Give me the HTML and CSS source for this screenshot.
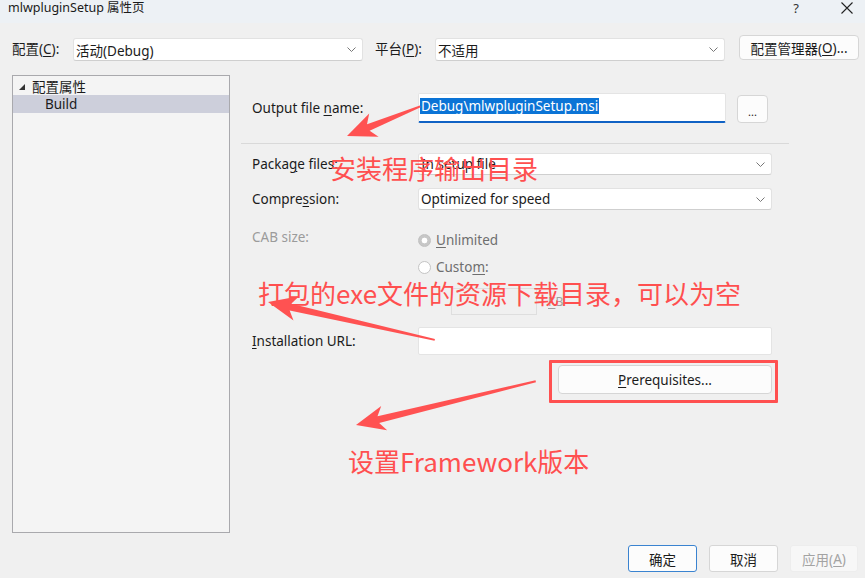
FILE: index.html
```html
<!DOCTYPE html>
<html lang="zh-CN">
<head>
<meta charset="utf-8">
<title>mlwpluginSetup 属性页</title>
<link rel="stylesheet" href="styles.css">
</head>
<body>
<div class="titlebar">
  <span class="title">mlwpluginSetup 属性页</span>
  <span class="tb-help">?</span>
  <svg class="tb-close" width="12" height="12" viewBox="0 0 12 12"><path d="M0.5 0.5 L11.5 11.5 M11.5 0.5 L0.5 11.5" stroke="#222" stroke-width="1.1" fill="none"/></svg>
</div>

<div class="toolbar">
  <span class="tlabel l1">配置(<u>C</u>):</span>
  <div class="select s1"><span>活动(Debug)</span><svg class="chev" width="9" height="5" viewBox="0 0 9 5"><path d="M0.5 0.5 L4.5 4.5 L8.5 0.5" stroke="#777" fill="none"/></svg></div>
  <span class="tlabel l2">平台(<u>P</u>):</span>
  <div class="select s2"><span>不适用</span><svg class="chev" width="9" height="5" viewBox="0 0 9 5"><path d="M0.5 0.5 L4.5 4.5 L8.5 0.5" stroke="#777" fill="none"/></svg></div>
  <div class="btn cfgmgr">配置管理器(<u>O</u>)...</div>
</div>

<div class="main">
  <div class="tree">
    <div class="tree-row root">
      <svg class="tri" width="6" height="6" viewBox="0 0 6 6"><path d="M6 0 L6 6 L0 6 Z" fill="#333"/></svg>
      <span>配置属性</span>
    </div>
    <div class="tree-row build">Build</div>
  </div>

  <div class="pane">
    <div class="row out-row">
      <span class="lbl">Output file <u>n</u>ame:</span>
      <div class="input out-input"><span class="sel">Debug\mlwpluginSetup.msi</span></div>
      <div class="btn dots">...</div>
    </div>
    <div class="sep"></div>
    <div class="row pkg-row">
      <span class="lbl">Packa<u>g</u>e files:</span>
      <div class="select wide"><span>In setup file</span><svg class="chev" width="9" height="5" viewBox="0 0 9 5"><path d="M0.5 0.5 L4.5 4.5 L8.5 0.5" stroke="#777" fill="none"/></svg></div>
    </div>
    <div class="row cmp-row">
      <span class="lbl">Compre<u>s</u>sion:</span>
      <div class="select wide"><span>Optimized for speed</span><svg class="chev" width="9" height="5" viewBox="0 0 9 5"><path d="M0.5 0.5 L4.5 4.5 L8.5 0.5" stroke="#777" fill="none"/></svg></div>
    </div>
    <div class="cab">
      <span class="lbl dis">CAB size:</span>
      <div class="radios">
        <div class="radio-row r1"><span class="radio checked"></span><span class="rtext"><u>U</u>nlimited</span></div>
        <div class="radio-row r2"><span class="radio"></span><span class="rtext">Custo<u>m</u>:</span></div>
        <div class="kb-row"><div class="kb-input"></div><span class="kb"><u>K</u>B</span></div>
      </div>
    </div>
    <div class="row url-row">
      <span class="lbl"><u>I</u>nstallation URL:</span>
      <div class="input url-input"></div>
    </div>
    <div class="btn prereq"><span><u>P</u>rerequisites...</span></div>
  </div>
</div>

<div class="footer">
  <div class="btn fbtn ok">确定</div>
  <div class="btn fbtn">取消</div>
  <div class="btn fbtn disabled">应用(<u>A</u>)</div>
</div>

<div class="note n1">安装程序输出目录</div>
<div class="note n2">打包的exe文件的资源下载目录，可以为空</div>
<div class="note n3">设置Framework版本</div>
<div class="redbox"></div>
<svg class="arrows" width="865" height="578" viewBox="0 0 865 578">
  <g fill="#ff5252">
    <g transform="translate(347 136) rotate(-22)"><polygon points="0,0 29,-12.5 23,-3.5 79,-1 79,1 23,3.5 29,12.5"/></g>
    <g transform="translate(268 302) rotate(12.8)"><polygon points="0,0 29,-12.5 23,-3.5 171,-1 171,1 23,3.5 29,12.5"/></g>
    <g transform="translate(356 425) rotate(-13.7)"><polygon points="0,0 29,-12.5 23,-3.5 185,-1 185,1 23,3.5 29,12.5"/></g>
  </g>
</svg>
</body>
</html>
```

FILE: styles.css
```css
* { box-sizing: border-box; }
html, body { margin: 0; padding: 0; }
body {
  width: 865px;
  height: 578px;
  overflow: hidden;
  position: relative;
  background: #f0f0f0;
  font-family: "Noto Sans", "Noto Sans CJK SC", sans-serif;
  font-size: 13.5px;
  color: #1b1b1b;
}
u { text-decoration-thickness: 1px; text-underline-offset: 2px; }

.titlebar {
  height: 23px;
  background: #edf1f5;
  display: flex;
  align-items: flex-start;
  padding-left: 8px;
}
.title { font-size: 12.5px; line-height: 15px; color: #1a1a1a; }
.tb-help { margin-left: auto; font-size: 13px; line-height: 16px; padding-top: 0; color: #333; }
.tb-close { margin: 2px 12px 0 42px; }

.toolbar {
  height: 52px;
  padding: 12px 0 0 12px;
  display: flex;
  align-items: flex-start;
}
.tlabel { line-height: 23px; margin-top: 3px; }
.l1 { width: 61px; }
.l2 { width: 60px; margin-left: 12px; }
.select {
  height: 23px;
  background: #fff;
  border: 1px solid #e2e2e2;
  border-bottom-color: #cfcfcf;
  border-radius: 3px;
  display: flex;
  align-items: center;
  padding: 0 6px 0 2px;
}
.select span { flex: 1; white-space: nowrap; }
.s1, .s2 { width: 290px; margin-top: 3px; }
.btn {
  background: #fcfcfc;
  border: 1px solid #d6d6d6;
  border-radius: 4px;
  display: flex;
  align-items: center;
  justify-content: center;
}
.cfgmgr { width: 120px; height: 25px; margin-left: 14px; }

.main { height: 458px; display: flex; padding-left: 12px; }
.tree {
  width: 218px;
  height: 458px;
  border: 1px solid #a9a9ad;
  background: #f4f4f4;
}
.tree-row { height: 18px; display: flex; align-items: center; white-space: nowrap; }
.root { height: 19px; padding-left: 6px; }
.tri { margin-right: 7px; margin-top: 2px; }
.build { background: #cdcfdb; padding-left: 32px; }

.pane { margin-left: 11px; width: 624px; }
.row { display: flex; align-items: center; }
.lbl { width: 177px; padding-left: 11px; flex: none; white-space: nowrap; }
.dis { color: #9b9b9b; }
.out-row { margin-top: 18px; height: 30px; }
.input { background: #fff; border: 1px solid #e4e4e4; border-radius: 2px; }
.out-input {
  width: 308px;
  height: 30px;
  border-bottom: 2px solid #1062c4;
  padding: 3px 0 0 1px;
  align-self: flex-start;
}
.sel { background: #0b74d6; color: #fff; line-height: 16px; display: inline-block; padding: 0 1px; }
.dots { width: 31px; height: 28px; margin-left: 11px; margin-top: 2px; align-self: flex-start; font-size: 11px; padding-top: 4px; }

.sep { margin-top: 20px; width: 548px; height: 1px; background: #d9d9d9; }
.pkg-row { margin-top: 9px; height: 22px; }
.cmp-row { margin-top: 13px; height: 22px; }
.wide { width: 354px; height: 22px; }

.cab { margin-top: 18px; display: flex; }
.cab .lbl { line-height: 18px; }
.radio-row { display: flex; align-items: center; height: 18px; color: #6e6e6e; }
.r1 { margin-top: 3px; }
.r2 { margin-top: 9px; }
.radio {
  width: 13px; height: 13px; border-radius: 50%;
  border: 1px solid #c4c4c4; background: #fff;
  margin-right: 5px; flex: none;
}
.radio.checked { background: radial-gradient(circle, #fff 0 2.6px, #c7c7c7 3.2px); border-color: #c0c0c0; }
.kb-row { margin-top: 12px; display: flex; align-items: center; height: 27px; }
.kb-input { margin-left: 33px; width: 86px; height: 27px; border: 1px solid #dedede; }
.kb { margin-left: 11px; color: #a0a0a0; font-size: 12px; }

.url-row { margin-top: 12px; height: 28px; }
.url-input { width: 354px; height: 28px; }
.prereq { margin-top: 10px; margin-left: 317px; width: 214px; height: 29px; }

.footer {
  margin-top: 12px;
  display: flex;
  justify-content: flex-end;
  gap: 12px;
  padding-right: 7px;
}
.fbtn { width: 69px; height: 27px; border-radius: 3px; }
.ok { border-color: #3a83d0; }
.disabled { background: #f7f7f7; border-color: #ededed; color: #a3a3a3; width: 68px; }

.note {
  position: absolute;
  color: #ff4f4f;
  font-family: "Noto Sans CJK SC", sans-serif;
  font-size: 26px;
  line-height: 30px;
  white-space: nowrap;
}
.n1 { left: 330px; top: 153px; }
.n2 { left: 258px; top: 278px; }
.n3 { left: 348px; top: 446px; }
.redbox {
  position: absolute;
  left: 549px; top: 360px;
  width: 229px; height: 43px;
  border: 3px solid #ff5050;
  border-radius: 1px;
}
.arrows { position: absolute; left: 0; top: 0; pointer-events: none; }
```
